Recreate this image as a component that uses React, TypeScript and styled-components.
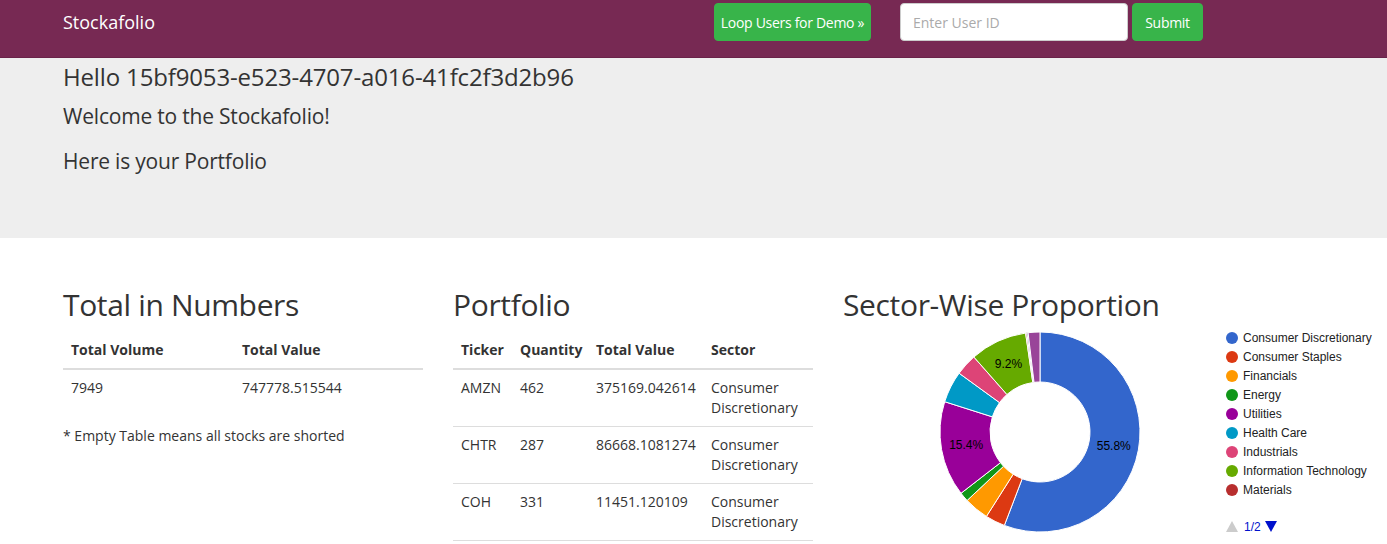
import React from "react";
import styled, { createGlobalStyle } from "styled-components";

const GlobalStyle = createGlobalStyle`
  html, body { margin: 0; padding: 0; background: #fff; }
  body {
    font-family: "Open Sans", "Noto Sans", sans-serif;
    font-size: 14px;
    line-height: 1.42857;
    color: #333;
  }
  * { box-sizing: border-box; }
`;

const Navbar = styled.nav`
  height: 58px;
  background: #772953;
  border-bottom: 1px solid #6a2249;
`;

const Container = styled.div`
  width: 1140px;
  margin-left: 63px;
`;

const NavInner = styled(Container)`
  height: 57px;
  display: flex;
  align-items: flex-start;
  justify-content: space-between;
`;

const Brand = styled.a`
  color: #fff;
  font-size: 18px;
  line-height: 20px;
  padding-top: 12px;
  text-decoration: none;
`;

const NavForm = styled.form`
  display: flex;
  align-items: center;
  padding-top: 3px;
`;

const GreenButton = styled.button<{ $gap?: number; $w: number }>`
  width: ${(p) => p.$w}px;
  height: 38px;
  padding: 0;
  margin-right: ${(p) => p.$gap ?? 0}px;
  background: #38b44a;
  border: 1px solid #38b44a;
  border-radius: 4px;
  color: #fff;
  font-family: inherit;
  font-size: 14px;
  letter-spacing: -0.3px;
  white-space: nowrap;
  cursor: pointer;
`;

const Input = styled.input`
  width: 228px;
  height: 38px;
  margin-right: 4px;
  padding: 6px 12px;
  border: 1px solid #ccc;
  border-radius: 4px;
  font-family: inherit;
  font-size: 14px;
  color: #555;
  &::placeholder { color: #aaa; }
`;

const Jumbotron = styled.section`
  background: #eeeeee;
  height: 180px;
  padding-top: 6px;
`;

const Hello = styled.h3`
  margin: 0 0 12px;
  font-size: 24px;
  font-weight: 400;
  line-height: 26.4px;
  letter-spacing: -0.15px;
`;

const Lead = styled.p<{ $mb: number }>`
  margin: 0 0 ${(p) => p.$mb}px;
  font-size: 21px;
  line-height: 29.4px;
  letter-spacing: -0.2px;
`;

const Main = styled(Container)`
  display: grid;
  grid-template-columns: 360px 360px 360px;
  column-gap: 30px;
  padding-top: 50px;
`;

const Col = styled.div`
  min-width: 0;
`;

const Heading = styled.h1`
  margin: 0 0 11px;
  font-size: 30px;
  font-weight: 400;
  line-height: 33px;
  letter-spacing: -0.35px;
  white-space: nowrap;
`;

const Table = styled.table`
  width: 100%;
  border-collapse: collapse;
  table-layout: fixed;
`;

const Th = styled.th<{ $w?: number }>`
  width: ${(p) => (p.$w ? `${p.$w}px` : "auto")};
  text-align: left;
  padding: 8px;
  line-height: 20px;
  font-weight: 700;
  border-bottom: 2px solid #ddd;
  font-size: 14px;
  white-space: nowrap;
`;

const Td = styled.td`
  padding: 8px;
  line-height: 20px;
  vertical-align: top;
  border-bottom: 1px solid #ddd;
`;

const PlainTd = styled(Td)`
  border-bottom: none;
`;

const Note = styled.p`
  margin: 20px 0 0;
  line-height: 20px;
`;

const ChartBox = styled.div`
  width: 540px;
  height: 222px;
  margin-top: -10px;
`;

type Slice = { label: string; value: number; color: string; showLabel?: boolean };

const slices: Slice[] = [
  { label: "Consumer Discretionary", value: 55.8, color: "#3366cc", showLabel: true },
  { label: "Consumer Staples", value: 3.2, color: "#dc3912" },
  { label: "Financials", value: 4.0, color: "#ff9900" },
  { label: "Energy", value: 1.5, color: "#109618" },
  { label: "Utilities", value: 15.4, color: "#990099", showLabel: true },
  { label: "Health Care", value: 5.1, color: "#0099c6" },
  { label: "Industrials", value: 3.5, color: "#dd4477" },
  { label: "Information Technology", value: 9.2, color: "#66aa00", showLabel: true },
  { label: "Materials", value: 0.2, color: "#b82e2e" },
  { label: "Telecommunication Services", value: 0.2, color: "#316395" },
  { label: "Real Estate", value: 1.9, color: "#994499" },
];

const CX = 197;
const CY = 110;
const R = 100;
const RI = 50;
const FONT = "'Liberation Sans', Arial, sans-serif";

function pt(r: number, deg: number) {
  const a = (deg * Math.PI) / 180;
  return [CX + r * Math.sin(a), CY - r * Math.cos(a)];
}

function arcPath(a0: number, a1: number) {
  const large = a1 - a0 > 180 ? 1 : 0;
  const [x0, y0] = pt(R, a0);
  const [x1, y1] = pt(R, a1);
  const [x2, y2] = pt(RI, a1);
  const [x3, y3] = pt(RI, a0);
  return `M${x0},${y0} A${R},${R} 0 ${large} 1 ${x1},${y1} L${x2},${y2} A${RI},${RI} 0 ${large} 0 ${x3},${y3} Z`;
}

function Donut() {
  let acc = 0;
  const parts = slices.map((s) => {
    const a0 = (acc / 100) * 360;
    acc += s.value;
    const a1 = (acc / 100) * 360;
    const mid = (a0 + a1) / 2;
    const [lx, ly] = pt(75, mid);
    return { ...s, a0, a1, lx, ly };
  });
  const legend = slices.slice(0, 9);
  return (
    <svg width="540" height="222" viewBox="0 0 540 222">
      {parts.map((p) => (
        <path key={p.label} d={arcPath(p.a0, p.a1)} fill={p.color} stroke="#fff" strokeWidth="1" />
      ))}
      {parts
        .filter((p) => p.showLabel)
        .map((p) => (
          <text key={`l-${p.label}`} x={p.lx} y={p.ly + 4} textAnchor="middle" fontFamily={FONT} fontSize="12" fill="#000">
            {p.value.toFixed(1)}%
          </text>
        ))}
      {legend.map((s, i) => (
        <g key={`lg-${s.label}`}>
          <circle cx="389" cy={16 + i * 19} r="6" fill={s.color} />
          <text x="400" y={20 + i * 19} fontFamily={FONT} fontSize="12" fill="#222">
            {s.label}
          </text>
        </g>
      ))}
      <path d="M383,210 L389,199 L395,210 Z" fill="#ccc" />
      <text x="401" y="209" fontFamily={FONT} fontSize="12" fill="#0011cc">
        1/2
      </text>
      <path d="M422,199 L434,199 L428,210 Z" fill="#0011cc" />
    </svg>
  );
}

const holdings = [
  { ticker: "AMZN", qty: 462, value: "375169.042614", sector: ["Consumer", "Discretionary"] },
  { ticker: "CHTR", qty: 287, value: "86668.1081274", sector: ["Consumer", "Discretionary"] },
  { ticker: "COH", qty: 331, value: "11451.120109", sector: ["Consumer", "Discretionary"] },
];

export default function App() {
  return (
    <>
      <GlobalStyle />
      <Navbar>
        <NavInner>
          <Brand href="#">Stockafolio</Brand>
          <NavForm onSubmit={(e) => e.preventDefault()}>
            <GreenButton type="button" $w={157} $gap={29}>
              Loop Users for Demo »
            </GreenButton>
            <Input placeholder="Enter User ID" />
            <GreenButton type="submit" $w={71}>
              Submit
            </GreenButton>
          </NavForm>
        </NavInner>
      </Navbar>
      <Jumbotron>
        <Container>
          <Hello>Hello 15bf9053-e523-4707-a016-41fc2f3d2b96</Hello>
          <Lead $mb={15}>Welcome to the Stockafolio!</Lead>
          <Lead $mb={0}>Here is your Portfolio</Lead>
        </Container>
      </Jumbotron>
      <Main>
        <Col>
          <Heading>Total in Numbers</Heading>
          <Table>
            <thead>
              <tr>
                <Th $w={171}>Total Volume</Th>
                <Th>Total Value</Th>
              </tr>
            </thead>
            <tbody>
              <tr>
                <PlainTd>7949</PlainTd>
                <PlainTd>747778.515544</PlainTd>
              </tr>
            </tbody>
          </Table>
          <Note>* Empty Table means all stocks are shorted</Note>
        </Col>
        <Col>
          <Heading>Portfolio</Heading>
          <Table>
            <thead>
              <tr>
                <Th $w={59}>Ticker</Th>
                <Th $w={76}>Quantity</Th>
                <Th $w={115}>Total Value</Th>
                <Th>Sector</Th>
              </tr>
            </thead>
            <tbody>
              {holdings.map((h) => (
                <tr key={h.ticker}>
                  <Td>{h.ticker}</Td>
                  <Td>{h.qty}</Td>
                  <Td>{h.value}</Td>
                  <Td>
                    {h.sector[0]}
                    <br />
                    {h.sector[1]}
                  </Td>
                </tr>
              ))}
            </tbody>
          </Table>
        </Col>
        <Col>
          <Heading>Sector-Wise Proportion</Heading>
          <ChartBox>
            <Donut />
          </ChartBox>
        </Col>
      </Main>
    </>
  );
}
